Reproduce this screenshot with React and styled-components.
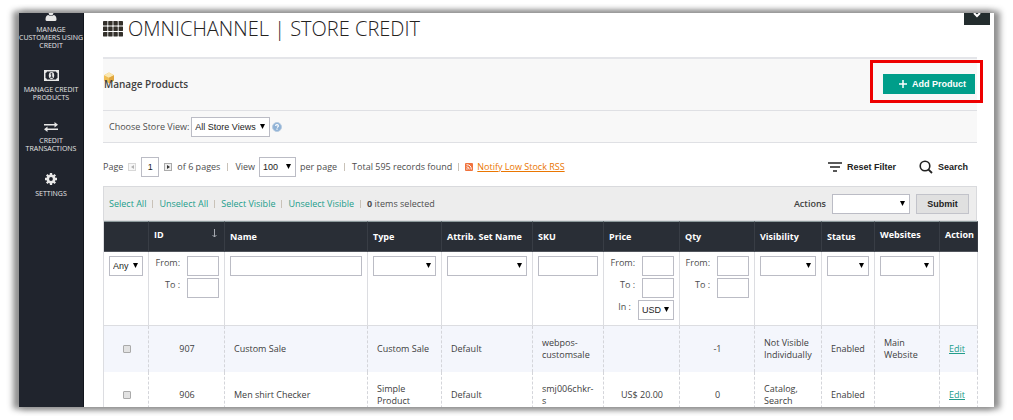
import React from 'react';
import styled, { createGlobalStyle, css } from 'styled-components';

const GlobalStyle = createGlobalStyle`
  *, *::before, *::after { box-sizing: border-box; }
  body {
    margin: 0;
    background: #fff;
    color: #4d4d4d;
    font: 9px/12px "Open Sans", "Noto Sans", sans-serif;
  }
  button, input, select { font-family: "Liberation Sans", Arial, sans-serif; }
`;

const teal = '#009e8a';
const ink = '#20242d';

const Page = styled.div`
  height: 100vh;
  padding: 13px 19px;
`;

const Frame = styled.div`
  position: relative;
  display: flex;
  height: 100%;
  background: #fff;
  box-shadow: 4px 0 6px 2px #919191, -4px 0 6px 2px #919191;
`;

const Sidebar = styled.nav`
  display: flex;
  flex: none;
  flex-direction: column;
  width: 65px;
  overflow: hidden;
  background: ${ink};
  border-right: 1px solid #11151c;
`;

const NavLink = styled.a`
  display: flex;
  flex-direction: column;
  align-items: center;
  gap: 5px;
  margin-bottom: 20px;
  color: #e8e8e8;
  font-size: 7px;
  line-height: 8px;
  text-align: center;
  text-decoration: none;
  white-space: nowrap;
  svg { display: block; }
`;

const Main = styled.main`
  flex: 1;
  min-width: 0;
  padding: 0 17px 0 19px;
  overflow: hidden;
`;

const MenuTab = styled.button`
  position: absolute;
  top: 0;
  right: 4px;
  display: flex;
  width: 26px;
  height: 12px;
  padding: 0;
  justify-content: center;
  border: 0;
  background: #232d2e;
`;

const Title = styled.h1`
  display: flex;
  align-items: center;
  gap: 5px;
  height: 44px;
  margin: 0;
  padding-bottom: 12px;
  color: #24221e;
  font-size: 20px;
  font-weight: 300;
  line-height: 28px;
  white-space: nowrap;
`;

const PanelHeader = styled.header`
  display: flex;
  align-items: center;
  justify-content: space-between;
  height: 54px;
  padding: 0 2px 2px 1px;
  background: #f8f8f8;
  border-top: 2px solid #e4e5e9;
  border-bottom: 1px solid #dfe0e4;
`;

const PanelTitle = styled.h2`
  position: relative;
  margin: 0;
  color: #404040;
  font-size: 10px;
  font-weight: 600;
  line-height: 16px;
  svg { position: absolute; left: -1px; top: -4px; }
  span { position: relative; }
`;

const Highlight = styled.div`
  position: relative;
  &::after {
    content: '';
    position: absolute;
    inset: -14px -8px -9px -13px;
    border: 3px solid #ee0000;
    pointer-events: none;
  }
`;

const AddButton = styled.button`
  display: flex;
  align-items: center;
  justify-content: flex-end;
  gap: 5px;
  width: 92px;
  height: 20px;
  padding: 0 9px 0 0;
  border: 0;
  background: ${teal};
  color: #fff;
  font-size: 9px;
  font-weight: 700;
  white-space: nowrap;
`;

const StoreBar = styled.div`
  display: flex;
  align-items: center;
  gap: 2px;
  height: 32px;
  padding-left: 6px;
  background: #f8f8f8;
  border-bottom: 1px solid #dfe0e4;
`;

const Pager = styled.div`
  display: flex;
  align-items: center;
  height: 43px;
  padding-top: 5px;
  white-space: nowrap;
`;

const PagerGroup = styled.div`
  display: flex;
  align-items: center;
  gap: ${(p) => (p.$tight ? 4 : 5)}px;
`;

const Bar = styled.i`
  width: 1px;
  height: 8px;
  margin: 0 ${(p) => (p.$tight ? 6 : 7)}px;
  background: #c9c2b8;
`;

const StepButton = styled.button`
  display: flex;
  align-items: center;
  justify-content: center;
  width: 8px;
  height: 8px;
  padding: 0;
  border: 1px solid #aaa;
  background: #eee;
  opacity: ${(p) => (p.disabled ? 0.45 : 1)};
`;

const RssLink = styled.a`
  color: #ea7601;
`;

const ToolButton = styled.button`
  display: flex;
  align-items: center;
  gap: 5px;
  padding: 0;
  border: 0;
  background: none;
  color: #222;
  font-size: 9px;
  font-weight: 700;
`;

const Tools = styled.div`
  display: flex;
  gap: 23px;
  margin-left: auto;
  padding-right: 9px;
`;

const MassBar = styled.div`
  display: flex;
  align-items: center;
  height: 35px;
  padding: 0 7px 0 5px;
  background: #ededed;
  border: 1px solid #d9dadd;
  white-space: nowrap;
`;

const TextLink = styled.a`
  color: #229d8b;
  text-decoration: ${(p) => (p.$underlined ? 'underline' : 'none')};
`;

const MassActions = styled.div`
  display: flex;
  align-items: center;
  gap: 6px;
  margin-left: auto;
  label { color: #404040; font-weight: 600; }
`;

const SubmitButton = styled.button`
  width: 53px;
  height: 20px;
  padding: 0;
  border: 1px solid #c2c3ca;
  background: #e0e0e0;
  color: #222;
  font-size: 9px;
  font-weight: 700;
`;

const field = css`
  display: block;
  width: 100%;
  height: 20px;
  border: 1px solid #bbbcc5;
  border-radius: 0;
  background: #fff;
  color: #222;
  font-size: 9px;
`;

const Input = styled.input`
  ${field}
  width: ${(p) => (p.$width ? `${p.$width}px` : '100%')};
  padding: 0;
  text-align: center;
`;

const SelectBox = styled.span`
  position: relative;
  display: block;
  flex: none;
  width: ${(p) => (p.$width ? `${p.$width}px` : '100%')};
  svg { position: absolute; right: 5px; top: 7px; pointer-events: none; }
`;

const NativeSelect = styled.select`
  ${field}
  appearance: none;
  padding: 0 10px 0 3px;
`;

function Select({ label, id, value = '', width }) {
  return (
    <SelectBox $width={width}>
      <NativeSelect id={id} aria-label={label}>
        <option>{value}</option>
      </NativeSelect>
      <svg width="5" height="5" viewBox="0 0 5 5"><path d="M0 0h5L2.5 5z" fill="#000" /></svg>
    </SelectBox>
  );
}

const Grid = styled.table`
  width: 100%;
  table-layout: fixed;
  border-collapse: separate;
  border-spacing: 0;
  border-left: 1px solid #dcdde1;
`;

const HeadCell = styled.th`
  height: 31px;
  padding: ${(p) => (p.$raised ? '0 5px 4px' : '0 5px')};
  background: #292e36;
  border-top: 1px solid #8d9a9c;
  border-right: 1px solid #383d45;
  border-bottom: 1px solid #51555c;
  color: #fff;
  font-size: 9px;
  font-weight: 700;
  text-align: left;
  white-space: nowrap;
`;

const HeadLabel = styled.span`
  display: flex;
  justify-content: space-between;
  padding-right: 2px;
`;

const FilterCell = styled.td`
  height: 74px;
  padding: 4px 5px 0;
  border-right: 1px solid #dcdde1;
  border-bottom: 1px solid #dcdde1;
  vertical-align: top;
`;

const RangeLine = styled.label`
  display: flex;
  justify-content: flex-end;
  gap: 7px;
  margin-bottom: 2px;
  line-height: 13px;
`;

const Row = styled.tr`
  background: ${(p) => (p.$tinted ? '#f4f6fc' : '#fff')};
`;

const Cell = styled.td`
  height: 46px;
  padding: 0 8px 0 9px;
  border-right: 1px dashed #d4d5da;
  text-align: ${(p) => p.$align || 'left'};
  color: #404040;
`;

const Check = styled.input`
  appearance: none;
  display: block;
  width: 8px;
  height: 8px;
  margin: 0 auto;
  border: 1px solid #aaa;
  border-radius: 1px;
  background: #e2e2e2;
`;

const columns = [
  { title: '', width: 45 },
  { title: 'ID', width: 76, raised: true, sorted: true },
  { title: 'Name', width: 143 },
  { title: 'Type', width: 74 },
  { title: 'Attrib. Set Name', width: 91 },
  { title: 'SKU', width: 71 },
  { title: 'Price', width: 76 },
  { title: 'Qty', width: 75 },
  { title: 'Visibility', width: 67 },
  { title: 'Status', width: 53 },
  { title: 'Websites', width: 65, raised: true },
  { title: 'Action', width: 38, raised: true },
];

const products = [
  { id: '907', name: 'Custom Sale', type: 'Custom Sale', set: 'Default', sku: 'webpos-customsale', price: '', qty: '-1', visibility: 'Not Visible Individually', status: 'Enabled', site: 'Main Website' },
  { id: '906', name: 'Men shirt Checker', type: 'Simple Product', set: 'Default', sku: 'smj006chkr-s', price: 'US$ 20.00', qty: '0', visibility: 'Catalog, Search', status: 'Enabled', site: '' },
];

function Range({ currency }) {
  return (
    <>
      <RangeLine>From: <Input $width={32} /></RangeLine>
      <RangeLine>To : <Input $width={32} /></RangeLine>
      {currency && <RangeLine>In : <Select value="USD" label="Currency" width={36} /></RangeLine>}
    </>
  );
}

const UserIcon = () => (
  <svg width="12" height="8" viewBox="0 0 12 8" fill="#e8e8e8">
    <path d="M3.500 0h5Q8 2.500 6 2.500T3.500 0zM.5 6.500Q.5 2.500 3.200 2Q6 4 8.800 2Q11.500 2.500 11.500 6.500Q11.500 8 10 8H2Q.5 8 .5 6.500z" />
  </svg>
);
const MoneyIcon = () => (
  <svg width="15" height="11" viewBox="0 0 15 11">
    <path fill="#e8e8e8" fillRule="evenodd" d="M0 0h15v11H0zM3 1.500Q2.800 2.800 1.500 3v5q1.300.2 1.500 1.500h9q.2-1.300 1.500-1.500V3Q12.200 2.800 12 1.500z" />
    <ellipse cx="7.500" cy="5.500" rx="2.700" ry="3.400" fill="#e8e8e8" />
    <path d="M6.500 4l1.200-.8V7M6.300 7.300h2.600" stroke={ink} fill="none" />
  </svg>
);
const SwapIcon = () => (
  <svg width="14" height="10" viewBox="0 0 14 10" fill="#e8e8e8">
    <path d="M0 2h10.500V0L14 2.700l-3.500 2.700V3.600H0zM14 6.400H3.500V4.600L0 7.300 3.500 10V8h10.500z" />
  </svg>
);
const GearIcon = () => (
  <svg width="12" height="12" viewBox="0 0 12 12">
    <circle cx="6" cy="6" r="3.200" fill="none" stroke="#e8e8e8" strokeWidth="2.600" />
    <path d="M6 0v2.500M6 9.500V12M0 6h2.500M9.500 6H12M1.800 1.800l1.700 1.700M8.500 8.500l1.700 1.700M10.200 1.800L8.500 3.500M3.500 8.500l-1.700 1.700" stroke="#e8e8e8" strokeWidth="2.300" />
  </svg>
);
const AppsIcon = () => (
  <svg width="20" height="16" viewBox="0 0 20 16" fill="#33302b">
    {[0, 5.500, 11].map((y) => [0, 5.200, 10.400, 15.600].map((x) => (
      <rect key={`${x}-${y}`} x={x} y={y} width="4.400" height="4.500" rx="0.400" />
    )))}
  </svg>
);
const CubeIcon = () => (
  <svg width="12" height="12" viewBox="0 0 12 12">
    <path d="M1 3.200L6 .500l5 2.700v5.300L6 11.500 1 8.500z" fill="#f0bf55" />
    <path d="M1 3.200L6 .500l5 2.700L6 5.800z" fill="#fae8b4" />
    <path d="M6 5.800l5-2.600v5.300l-5 3z" fill="#e0a63f" />
  </svg>
);
const HelpIcon = () => (
  <svg width="10" height="10" viewBox="0 0 10 10">
    <circle cx="5" cy="5" r="4.500" fill="#8fb2d6" stroke="#b9cce0" />
    <path d="M3.600 4Q3.600 2.600 5 2.600T6.400 4Q6.400 4.700 5 5.400M5 6.500v1.200" stroke="#fff" strokeWidth="1.200" fill="none" />
  </svg>
);
const RssIcon = () => (
  <svg width="8" height="8" viewBox="0 0 8 8">
    <rect width="8" height="8" rx="1" fill="#f0723c" />
    <path d="M1.500 3.800q2.700 0 2.700 2.700M1.500 1.700q4.800 0 4.800 4.800" stroke="#fff" fill="none" />
    <circle cx="2" cy="6" r=".7" fill="#fff" />
  </svg>
);

export default function App() {
  return (
    <>
      <GlobalStyle />
      <Page>
        <Frame>
          <Sidebar>
            <NavLink href="#customers"><UserIcon /><span>MANAGE<br />CUSTOMERS USING<br />CREDIT</span></NavLink>
            <NavLink href="#products"><MoneyIcon /><span>MANAGE CREDIT<br />PRODUCTS</span></NavLink>
            <NavLink href="#transactions"><SwapIcon /><span>CREDIT<br />TRANSACTIONS</span></NavLink>
            <NavLink href="#settings"><GearIcon /><span>SETTINGS</span></NavLink>
          </Sidebar>
          <Main>
            <Title><AppsIcon />OMNICHANNEL | STORE CREDIT</Title>
            <PanelHeader>
              <PanelTitle><CubeIcon /><span>Manage Products</span></PanelTitle>
              <Highlight>
                <AddButton>
                  <svg width="8" height="8" viewBox="0 0 8 8"><path d="M4 0v8M0 4h8" stroke="#fff" strokeWidth="1.500" /></svg>
                  Add Product
                </AddButton>
              </Highlight>
            </PanelHeader>
            <StoreBar>
              <label htmlFor="store">Choose Store View:</label>
              <Select id="store" value="All Store Views" width={79} />
              <HelpIcon />
            </StoreBar>
            <Pager>
              <PagerGroup>
                <label htmlFor="page">Page</label>
                <StepButton disabled aria-label="Previous page">
                  <svg width="3" height="4" viewBox="0 0 3 4"><path d="M3 0v4L0 2z" fill="#555" /></svg>
                </StepButton>
                <Input id="page" defaultValue="1" $width={18} />
                <StepButton aria-label="Next page">
                  <svg width="3" height="4" viewBox="0 0 3 4"><path d="M0 0v4l3-2z" fill="#333" /></svg>
                </StepButton>
                <span>of 6 pages</span>
              </PagerGroup>
              <Bar />
              <PagerGroup $tight>
                <label htmlFor="limit">View</label>
                <Select id="limit" value="100" width={37} />
                <span>per page</span>
              </PagerGroup>
              <Bar />
              <span>Total 595 records found</span>
              <Bar $tight />
              <PagerGroup $tight>
                <RssIcon />
                <RssLink href="#rss">Notify Low Stock RSS</RssLink>
              </PagerGroup>
              <Tools>
                <ToolButton>
                  <svg width="14" height="10" viewBox="0 0 14 10"><path d="M0 1h14M2 5h10M5 9h4" stroke="#222" strokeWidth="1.700" /></svg>
                  Reset Filter
                </ToolButton>
                <ToolButton>
                  <svg width="14" height="14" viewBox="0 0 14 14"><circle cx="6" cy="6" r="4.800" fill="none" stroke="#222" strokeWidth="1.600" /><path d="M9.300 9.300L13 13" stroke="#222" strokeWidth="1.800" /></svg>
                  Search
                </ToolButton>
              </Tools>
            </Pager>
            <MassBar>
              <TextLink href="#all">Select All</TextLink><Bar $tight />
              <TextLink href="#none">Unselect All</TextLink><Bar $tight />
              <TextLink href="#visible">Select Visible</TextLink><Bar $tight />
              <TextLink href="#invisible">Unselect Visible</TextLink><Bar $tight />
              <span><b>0</b> items selected</span>
              <MassActions>
                <label htmlFor="actions">Actions</label>
                <Select id="actions" width={78} />
                <SubmitButton>Submit</SubmitButton>
              </MassActions>
            </MassBar>
            <Grid>
              <colgroup>{columns.map((c, i) => <col key={i} width={c.width} />)}</colgroup>
              <thead>
                <tr>
                  {columns.map((c, i) => (
                    <HeadCell key={i} $raised={c.raised}>
                      <HeadLabel>
                        {c.title}
                        {c.sorted && <svg width="5" height="9" viewBox="0 0 5 9"><path d="M2.500 0v8M.5 6l2 2 2-2" fill="none" stroke="#a5a9b0" /></svg>}
                      </HeadLabel>
                    </HeadCell>
                  ))}
                </tr>
              </thead>
              <tbody>
                <tr>
                  <FilterCell><Select value="Any" label="Selected" /></FilterCell>
                  <FilterCell><Range /></FilterCell>
                  <FilterCell><Input aria-label="Name" /></FilterCell>
                  <FilterCell><Select label="Type" /></FilterCell>
                  <FilterCell><Select label="Attribute set" /></FilterCell>
                  <FilterCell><Input aria-label="SKU" /></FilterCell>
                  <FilterCell><Range currency /></FilterCell>
                  <FilterCell><Range /></FilterCell>
                  <FilterCell><Select label="Visibility" /></FilterCell>
                  <FilterCell><Select label="Status" /></FilterCell>
                  <FilterCell><Select label="Websites" /></FilterCell>
                  <FilterCell />
                </tr>
                {products.map((p, i) => (
                  <Row key={p.id} $tinted={i % 2 === 0}>
                    <Cell><Check type="checkbox" aria-label={`Select ${p.id}`} /></Cell>
                    <Cell $align="center">{p.id}</Cell>
                    <Cell>{p.name}</Cell>
                    <Cell>{p.type}</Cell>
                    <Cell>{p.set}</Cell>
                    <Cell>{p.sku}</Cell>
                    <Cell $align="center">{p.price}</Cell>
                    <Cell $align="center">{p.qty}</Cell>
                    <Cell>{p.visibility}</Cell>
                    <Cell>{p.status}</Cell>
                    <Cell>{p.site}</Cell>
                    <Cell><TextLink href="#edit" $underlined>Edit</TextLink></Cell>
                  </Row>
                ))}
              </tbody>
            </Grid>
          </Main>
          <MenuTab aria-label="Open menu">
            <svg width="8" height="5" viewBox="0 0 8 5"><path d="M1 0l3 3 3-3" fill="none" stroke="#fff" strokeWidth="2" /></svg>
          </MenuTab>
        </Frame>
      </Page>
    </>
  );
}
